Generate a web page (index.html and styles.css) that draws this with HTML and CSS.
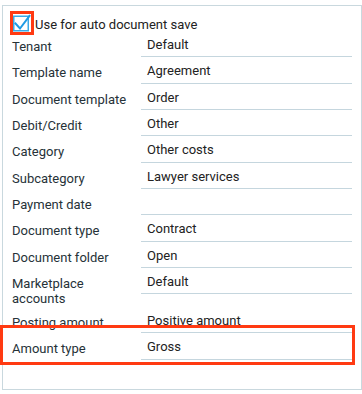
FILE: index.html
```html
<!DOCTYPE html>
<html>
<head>
<meta charset="utf-8">
<link rel="stylesheet" href="styles.css">
</head>
<body>
<div class="panel">
  <div class="check-row">
    <span class="check">
      <svg width="18" height="18" viewBox="0 0 18 18">
        <rect x="0.75" y="2.25" width="14.5" height="14.5" fill="#fff" stroke="#3aa9e6" stroke-width="1.5"/>
        <path d="M2.5 9.5 L7 14.5 L16.5 2" fill="none" stroke="#1e9be4" stroke-width="2" stroke-linecap="square"/>
      </svg>
    </span>
    <span class="check-text">Use for auto document save</span>
  </div>
  <div class="form">
    <div class="row"><div class="lbl">Tenant</div><div class="val">Default</div></div>
    <div class="row"><div class="lbl">Template name</div><div class="val">Agreement</div></div>
    <div class="row"><div class="lbl">Document template</div><div class="val">Order</div></div>
    <div class="row"><div class="lbl">Debit/Credit</div><div class="val">Other</div></div>
    <div class="row"><div class="lbl">Category</div><div class="val">Other costs</div></div>
    <div class="row"><div class="lbl">Subcategory</div><div class="val">Lawyer services</div></div>
    <div class="row"><div class="lbl">Payment date</div><div class="val"></div></div>
    <div class="row"><div class="lbl">Document type</div><div class="val">Contract</div></div>
    <div class="row"><div class="lbl">Document folder</div><div class="val">Open</div></div>
    <div class="row"><div class="lbl">Marketplace accounts</div><div class="val">Default</div></div>
    <div class="row"><div class="lbl">Posting amount</div><div class="val">Positive amount</div></div>
    <div class="row hl"><div class="lbl">Amount type</div><div class="val">Gross</div></div>
  </div>
</div>
</body>
</html>
```
FILE: styles.css
```css
html, body {
  margin: 0;
  padding: 0;
  background: #fff;
}
body {
  font-family: Roboto, "Liberation Sans", sans-serif;
  font-size: 13px;
  color: #222;
}
.panel {
  box-sizing: border-box;
  margin: 5px 0 0 2px;
  width: 360px;
  height: 385px;
  border: 1px solid #c9d8de;
  padding: 8px 9px 0 9px;
}
.check-row {
  display: flex;
  align-items: flex-start;
  height: 17px;
  gap: 4px;
  margin-left: 1px;
}
.check {
  display: block;
  width: 18px;
  height: 18px;
  outline: 3px solid #ff3a12;
  flex: none;
}
.check svg {
  display: block;
}
.check-text {
  line-height: 17px;
  padding-top: 2px;
  color: #222;
}
.form {
  display: flex;
  flex-direction: column;
}
.row {
  display: grid;
  grid-template-columns: 129px 211px;
  align-items: start;
}
.lbl {
  padding: 8px 8px 1px 0;
  line-height: 15px;
  color: #263238;
}
.val {
  box-sizing: border-box;
  height: 26.33px;
  padding: 6px 6px 0 6px;
  line-height: 15px;
  border-bottom: 1px solid #c5d6de;
  color: #222;
}
.hl {
  position: relative;
}
.hl::after {
  content: "";
  position: absolute;
  left: -12px;
  top: -8px;
  width: 355px;
  height: 40px;
  box-sizing: border-box;
  border: 3px solid #ff3a12;
  pointer-events: none;
}
```
